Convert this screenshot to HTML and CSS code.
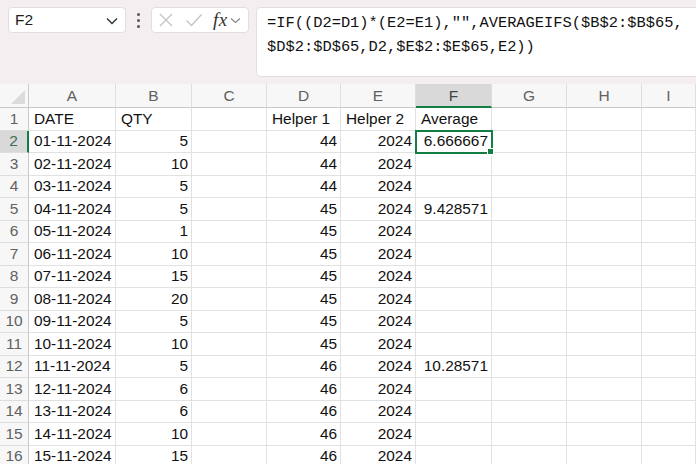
FILE: index.html
```html
<!DOCTYPE html>
<html>
<head>
<meta charset="utf-8">
<link rel="stylesheet" href="styles.css">
</head>
<body>
<div class="app">
  <div class="toolbar">
    <div class="namebox"><span class="ref">F2</span>
      <svg class="chev" width="12" height="8" viewBox="0 0 12 8"><path d="M1 1.5 L6 6.5 L11 1.5" fill="none" stroke="#333" stroke-width="1.4"/></svg>
    </div>
    <div class="dots"><span></span><span></span><span></span></div>
    <div class="fxbox">
      <svg class="ico" width="16" height="16" viewBox="0 0 16 16"><path d="M2 2 L14 14 M14 2 L2 14" stroke="#c4c4c4" stroke-width="1.4" fill="none"/></svg>
      <svg class="ico" width="18" height="16" viewBox="0 0 18 16"><path d="M1.5 8.5 L6.5 13.5 L16.5 2.5" stroke="#c4c4c4" stroke-width="1.4" fill="none"/></svg>
      <span class="fx">fx</span>
      <svg class="chev2" width="11" height="7" viewBox="0 0 11 7"><path d="M1 1.5 L5.5 5.5 L10 1.5" fill="none" stroke="#888" stroke-width="1.2"/></svg>
    </div>
    <div class="formula">=IF((D2=D1)*(E2=E1),"",AVERAGEIFS($B$2:$B$65,<br>$D$2:$D$65,D2,$E$2:$E$65,E2))</div>
  </div>
  <div class="sheet">
    <div class="corner"></div>
    <div class="ch">A</div><div class="ch">B</div><div class="ch">C</div><div class="ch">D</div><div class="ch">E</div><div class="ch sel">F</div><div class="ch">G</div><div class="ch">H</div><div class="ch">I</div>

    <div class="rh">1</div><div class="c">DATE</div><div class="c">QTY</div><div class="c"></div><div class="c">Helper 1</div><div class="c">Helper 2</div><div class="c">Average</div><div class="c"></div><div class="c"></div><div class="c"></div>
    <div class="rh sel">2</div><div class="c">01-11-2024</div><div class="c n">5</div><div class="c"></div><div class="c n">44</div><div class="c n">2024</div><div class="c n active">6.666667</div><div class="c"></div><div class="c"></div><div class="c"></div>
    <div class="rh">3</div><div class="c">02-11-2024</div><div class="c n">10</div><div class="c"></div><div class="c n">44</div><div class="c n">2024</div><div class="c"></div><div class="c"></div><div class="c"></div><div class="c"></div>
    <div class="rh">4</div><div class="c">03-11-2024</div><div class="c n">5</div><div class="c"></div><div class="c n">44</div><div class="c n">2024</div><div class="c"></div><div class="c"></div><div class="c"></div><div class="c"></div>
    <div class="rh">5</div><div class="c">04-11-2024</div><div class="c n">5</div><div class="c"></div><div class="c n">45</div><div class="c n">2024</div><div class="c n">9.428571</div><div class="c"></div><div class="c"></div><div class="c"></div>
    <div class="rh">6</div><div class="c">05-11-2024</div><div class="c n">1</div><div class="c"></div><div class="c n">45</div><div class="c n">2024</div><div class="c"></div><div class="c"></div><div class="c"></div><div class="c"></div>
    <div class="rh">7</div><div class="c">06-11-2024</div><div class="c n">10</div><div class="c"></div><div class="c n">45</div><div class="c n">2024</div><div class="c"></div><div class="c"></div><div class="c"></div><div class="c"></div>
    <div class="rh">8</div><div class="c">07-11-2024</div><div class="c n">15</div><div class="c"></div><div class="c n">45</div><div class="c n">2024</div><div class="c"></div><div class="c"></div><div class="c"></div><div class="c"></div>
    <div class="rh">9</div><div class="c">08-11-2024</div><div class="c n">20</div><div class="c"></div><div class="c n">45</div><div class="c n">2024</div><div class="c"></div><div class="c"></div><div class="c"></div><div class="c"></div>
    <div class="rh">10</div><div class="c">09-11-2024</div><div class="c n">5</div><div class="c"></div><div class="c n">45</div><div class="c n">2024</div><div class="c"></div><div class="c"></div><div class="c"></div><div class="c"></div>
    <div class="rh">11</div><div class="c">10-11-2024</div><div class="c n">10</div><div class="c"></div><div class="c n">45</div><div class="c n">2024</div><div class="c"></div><div class="c"></div><div class="c"></div><div class="c"></div>
    <div class="rh">12</div><div class="c">11-11-2024</div><div class="c n">5</div><div class="c"></div><div class="c n">46</div><div class="c n">2024</div><div class="c n">10.28571</div><div class="c"></div><div class="c"></div><div class="c"></div>
    <div class="rh">13</div><div class="c">12-11-2024</div><div class="c n">6</div><div class="c"></div><div class="c n">46</div><div class="c n">2024</div><div class="c"></div><div class="c"></div><div class="c"></div><div class="c"></div>
    <div class="rh">14</div><div class="c">13-11-2024</div><div class="c n">6</div><div class="c"></div><div class="c n">46</div><div class="c n">2024</div><div class="c"></div><div class="c"></div><div class="c"></div><div class="c"></div>
    <div class="rh">15</div><div class="c">14-11-2024</div><div class="c n">10</div><div class="c"></div><div class="c n">46</div><div class="c n">2024</div><div class="c"></div><div class="c"></div><div class="c"></div><div class="c"></div>
    <div class="rh">16</div><div class="c">15-11-2024</div><div class="c n">15</div><div class="c"></div><div class="c n">46</div><div class="c n">2024</div><div class="c"></div><div class="c"></div><div class="c"></div><div class="c"></div>
  </div>
</div>
</body>
</html>
```
FILE: styles.css
```css
html, body {
  margin: 0;
  padding: 0;
  background: #ffffff;
}
.app {
  width: 696px;
  height: 464px;
  overflow: hidden;
  font-family: "Liberation Sans", Arial, sans-serif;
}
.toolbar {
  height: 84px;
  background: #f4eef0;
  display: flex;
  align-items: flex-start;
  padding: 7px 0 0 8px;
  box-sizing: border-box;
  overflow: hidden;
}
.toolbar > * { flex-shrink: 0; }
.namebox {
  width: 118px;
  height: 26px;
  background: #fff;
  border: 1px solid #e4dde0;
  border-radius: 4px;
  box-sizing: border-box;
  display: flex;
  align-items: center;
  justify-content: space-between;
  padding: 0 7px 0 6px;
  font-size: 15.5px;
  color: #1f1f1f;
}
.chev { margin-top: 1px; }
.dots {
  width: 25px;
  height: 26px;
  display: flex;
  flex-direction: column;
  align-items: center;
  justify-content: center;
  gap: 3px;
}
.dots span {
  width: 3px;
  height: 3px;
  background: #555;
  border-radius: 50%;
}
.fxbox {
  width: 98px;
  height: 26px;
  background: #fff;
  border: 1px solid #e4dde0;
  border-radius: 4px;
  box-sizing: border-box;
  display: flex;
  align-items: center;
  padding: 0 0 0 6px;
  gap: 11px;
}
.fx {
  font-family: "Liberation Serif", "Times New Roman", serif;
  font-style: italic;
  font-size: 19px;
  color: #333;
  margin-left: -1px;
  letter-spacing: 0.5px;
}
.chev2 { margin-left: -9px; }
.formula {
  margin-left: 7px;
  width: 460px;
  height: 70px;
  background: #fff;
  border: 1px solid #e4dde0;
  border-right: none;
  border-radius: 5px 0 0 5px;
  box-sizing: border-box;
  padding: 3px 0 0 10px;
  font-family: "Liberation Mono", "DejaVu Sans Mono", monospace;
  font-size: 15.4px;
  line-height: 24px;
  color: #111;
  white-space: nowrap;
}
.sheet {
  display: grid;
  grid-template-columns: 29px 87px 76px 75px 74px 75px 76px 75px 75px 54px;
  grid-template-rows: 24px repeat(16, 22.5px);
  font-size: 15.4px;
  color: #111;
}
.corner, .ch, .rh {
  background: #f7f7f7;
  color: #616161;
  box-sizing: border-box;
  display: flex;
  align-items: center;
  justify-content: center;
}
.corner {
  border-right: 1px solid #c9c9c9;
  border-bottom: 1px solid #c9c9c9;
  position: relative;
}
.corner::after {
  content: "";
  position: absolute;
  right: 3px;
  bottom: 3px;
  width: 0;
  height: 0;
  border-left: 14px solid transparent;
  border-bottom: 14px solid #dcdcdc;
}
.ch {
  border-right: 1px solid #dedede;
  border-bottom: 1px solid #c9c9c9;
  font-size: 15.5px;
  padding-top: 1px;
}
.ch.sel {
  background: #d9d9d9;
  color: #444;
  border-bottom: 2px solid #137e43;
}
.rh {
  border-right: 1px solid #c9c9c9;
  border-bottom: 1px solid #dedede;
  font-size: 15.5px;
}
.rh.sel {
  background: #d9d9d9;
  color: #3e6e55;
  border-right: 2px solid #137e43;
}
.c {
  box-sizing: border-box;
  border-right: 1px solid #e1e1e1;
  border-bottom: 1px solid #e1e1e1;
  display: flex;
  align-items: center;
  padding: 0 4px 0 5px;
  white-space: nowrap;
  overflow: visible;
}
.c.n {
  justify-content: flex-end;
  padding-right: 3px;
}
.c.active {
  position: relative;
  outline: 2px solid #137e43;
  outline-offset: -1px;
}
.c.active::after {
  content: "";
  position: absolute;
  right: -3px;
  bottom: -3px;
  width: 5px;
  height: 5px;
  background: #137e43;
  border: 1px solid #fff;
}
```
